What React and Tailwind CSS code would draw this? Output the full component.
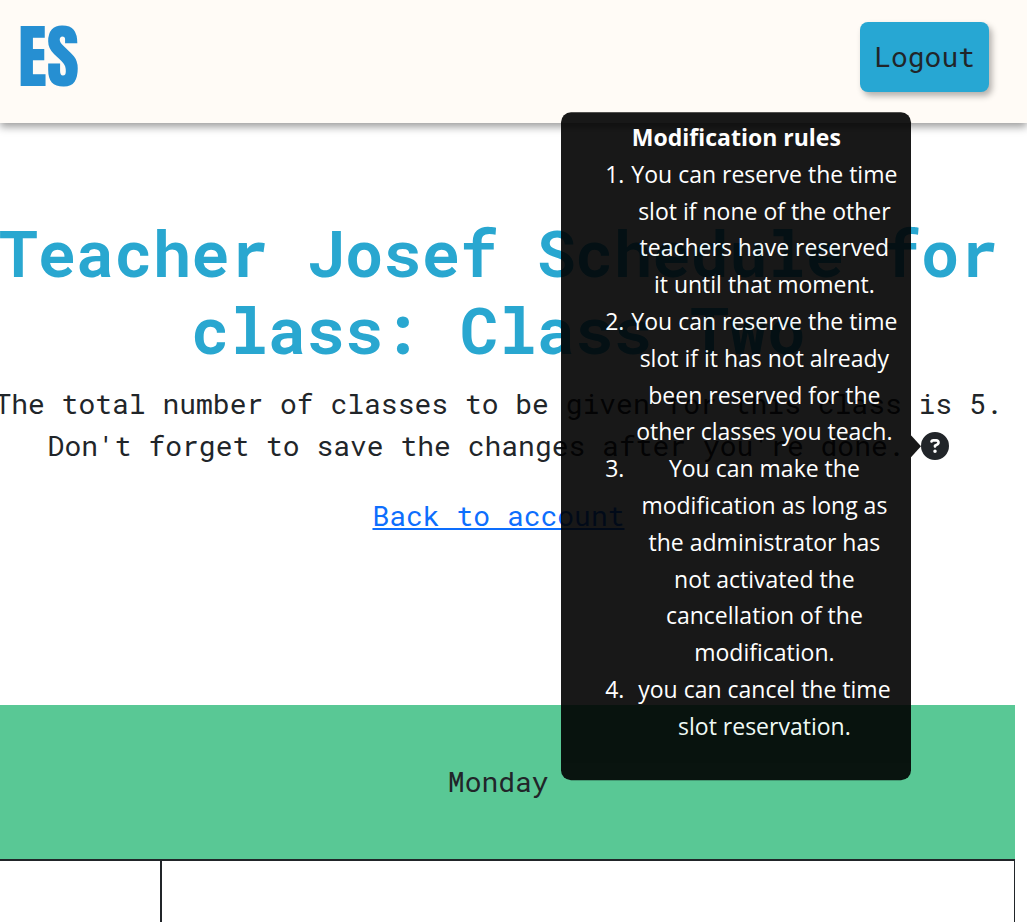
import { FaCircleQuestion } from "react-icons/fa6";

const rules = [
  "You can reserve the time slot if none of the other teachers have reserved it until that moment.",
  "You can reserve the time slot if it has not already been reserved for the other classes you teach.",
  "You can make the modification as long as the administrator has not activated the cancellation of the modification.",
  "you can cancel the time slot reservation.",
];

function Header() {
  return (
    <header className="flex items-center justify-between bg-[#fffbf6] pt-[22px] pr-[38px] pb-[31px] pl-[18px] shadow-[0_4px_8px_rgba(0,0,0,0.38)]">
      <a
        href="#home"
        className="font-['Impact','Anton','Liberation_Sans_Narrow',sans-serif] text-[70px] leading-[70px] font-normal text-[#268fd2]"
      >
        ES
      </a>
      <button
        type="button"
        className="rounded-lg bg-[#27a7d3] p-[14px] leading-[42px] shadow-[3px_4px_6px_rgba(0,0,0,0.3)]"
      >
        Logout
      </button>
    </header>
  );
}

function RulesTooltip() {
  return (
    <div
      id="rules"
      role="tooltip"
      className="absolute top-1/2 right-full z-10 mr-[10px] w-[350px] -translate-y-1/2 opacity-90"
    >
      <div className="rounded-[10px] bg-black px-[13px] py-[7px] text-center font-['Segoe_UI','Open_Sans',sans-serif] text-[23px] leading-[1.6] text-white">
        <strong className="font-bold">Modification rules</strong>
        <ol className="mb-7 list-decimal pl-14">
          {rules.map((rule) => (
            <li key={rule}>{rule}</li>
          ))}
        </ol>
      </div>
      <svg
        viewBox="0 0 10 22"
        className="absolute top-1/2 left-full h-[22px] w-[10px] -translate-y-1/2"
        aria-hidden="true"
      >
        <path d="M0 0L10 11L0 22Z" fill="#000" />
      </svg>
    </div>
  );
}

export default function App() {
  return (
    <div className="min-h-screen overflow-hidden bg-white font-['Roboto_Mono','DejaVu_Sans_Mono',monospace] text-[28px] leading-[42px] text-[#212529]">
      <Header />
      <main className="mr-3 -ml-[18px] pt-[91px] text-center">
        <h1 className="mb-[15px] text-[64px] leading-[77px] font-bold text-[#29a7d0]">
          Teacher Josef Schedule for class: Class Two
        </h1>
        <p>
          The total number of classes to be given for this class is 5. Don't
          forget to save the changes after you're done.{" "}
          <span className="relative inline-block size-7 align-[-4px]">
            <button
              type="button"
              aria-label="Modification rules"
              aria-describedby="rules"
              className="block size-7"
            >
              <FaCircleQuestion className="size-7" />
            </button>
            <RulesTooltip />
          </span>
        </p>
        <p className="mt-7">
          <a href="#account" className="text-[#0d6efd] underline">
            Back to account
          </a>
        </p>
        <table className="mt-[168px] w-full table-fixed border-collapse">
          <colgroup>
            <col className="w-[179px]" />
            <col />
          </colgroup>
          <thead>
            <tr className="border-b-2 border-[#212529] bg-[#59c895]">
              <th colSpan={2} className="py-14 font-normal">
                Monday
              </th>
            </tr>
          </thead>
          <tbody>
            <tr>
              <td className="h-16 border-r-2 border-[#212529]"></td>
              <td className="border-r border-[#212529]"></td>
            </tr>
          </tbody>
        </table>
      </main>
    </div>
  );
}
